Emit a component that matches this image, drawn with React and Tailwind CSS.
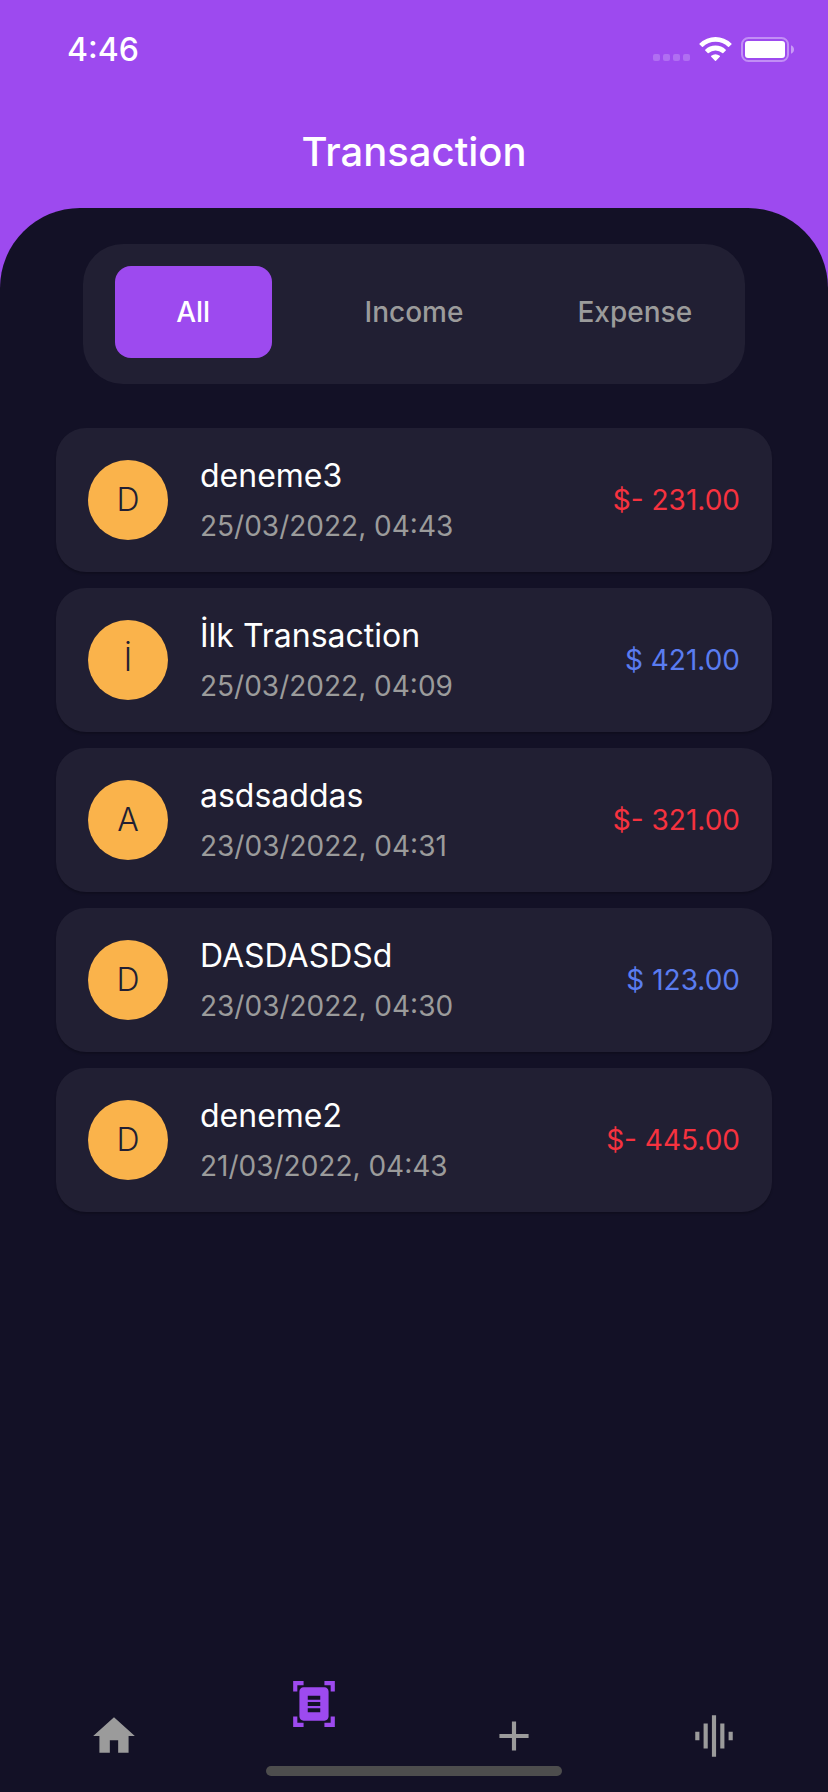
import { useState } from "react";

const transactions = [
  { id: 1, title: "deneme3", date: "25/03/2022, 04:43", amount: -231 },
  { id: 2, title: "İlk Transaction", date: "25/03/2022, 04:09", amount: 421 },
  { id: 3, title: "asdsaddas", date: "23/03/2022, 04:31", amount: -321 },
  { id: 4, title: "DASDASDSd", date: "23/03/2022, 04:30", amount: 123 },
  { id: 5, title: "deneme2", date: "21/03/2022, 04:43", amount: -445 },
];

const filters = ["All", "Income", "Expense"];

const tabs = [
  { name: "Home", path: "M10 20v-6h4v6h5v-8h3L12 3 2 12h3v8z" },
  {
    name: "Transactions",
    path: "M7 3H4v3H2V1h5v2zM22 6V1h-5v2h3v3h2zM7 21H4v-3H2v5h5v-2zM20 18v3h-3v2h5v-5h-2zM19 18c0 1.1-.9 2-2 2H7c-1.1 0-2-.9-2-2V6c0-1.1.9-2 2-2h10c1.1 0 2 .9 2 2v12zM15 8H9v2h6V8zm0 3H9v2h6v-2zm0 3H9v2h6v-2z",
  },
  { name: "Add", path: "M19 13h-6v6h-2v-6H5v-2h6V5h2v6h6v2z" },
  {
    name: "Statistics",
    path: "M7 18h2V6H7v12zm4 4h2V2h-2v20zm-8-8h2v-4H3v4zm12 4h2V6h-2v12zm4-8v4h2v-4h-2z",
  },
];

function StatusBar() {
  return (
    <div className="flex h-[99px] items-center justify-between pr-[34px] pl-[67px]">
      <span className="text-[32px] leading-[34px] font-medium">4:46</span>
      <div className="flex items-end gap-[9px]">
        <svg width="37" height="25" viewBox="0 0 37 25" fill="#fff" fillOpacity="0.2" aria-hidden="true">
          <rect x="0" y="17" width="7" height="7" rx="2" />
          <rect x="10" y="17" width="7" height="7" rx="2" />
          <rect x="20" y="17" width="7" height="7" rx="2" />
          <rect x="30" y="17" width="7" height="7" rx="2" />
        </svg>
        <svg width="33" height="25" viewBox="0 0 33 25" fill="#fff" aria-hidden="true">
          <path d="M.6 6.4A23 23 0 0 1 32.4 6.4Q32.9 6.9 32.4 7.4L30 9.8Q29.5 10.2 29 9.8A18.200 18.200 0 0 0 4 9.800Q3.500 10.200 3 9.800L.6 7.400Q.1 6.900 .6 6.400Z" />
          <path d="M6.200 12.700A15 15 0 0 1 26.800 12.700Q27.200 13.200 26.800 13.600L24.300 16.100Q23.800 16.500 23.300 16.100A10 10 0 0 0 9.700 16.100Q9.200 16.500 8.700 16.100L6.200 13.600Q5.800 13.200 6.200 12.700Z" />
          <path d="M12.200 18.800A7 7 0 0 1 20.800 18.800Q21.300 19.300 20.800 19.800L17 23.700Q16.500 24.200 16 23.700L12.200 19.800Q11.700 19.300 12.200 18.800Z" />
        </svg>
        <svg width="53" height="25" viewBox="0 0 53 25" aria-hidden="true">
          <rect x="1" y="1" width="46" height="23" rx="6.500" fill="none" stroke="#fff" strokeOpacity="0.38" strokeWidth="2" />
          <rect x="4" y="4" width="40" height="17" rx="3" fill="#fff" />
          <path d="M50 8.200C52 9 53 10.500 53 12.500S52 16 50 16.800Z" fill="#fff" fillOpacity="0.45" />
        </svg>
      </div>
    </div>
  );
}

function TransactionCard({ title, date, amount }) {
  const spent = amount < 0;
  return (
    <li className="flex items-center gap-8 rounded-[30px] bg-[#211f33] p-8 shadow-[0_2px_2px_rgba(0,0,0,0.2)]">
      <span
        aria-hidden="true"
        className="flex size-20 shrink-0 items-center justify-center rounded-full bg-[#fab34b] text-[32px] leading-none font-light text-[#211f33]"
      >
        {title[0].toUpperCase()}
      </span>
      <div className="-my-2 flex min-w-0 flex-1 flex-col gap-2">
        <h2 className="text-[32px] leading-11 text-white">{title}</h2>
        <p className="text-[28px] leading-10 text-[#9b9b9b]">{date}</p>
      </div>
      <span className={spent ? "text-[28px] leading-10 text-[#f6323f]" : "text-[28px] leading-10 text-[#5a7cf0]"}>
        {spent ? "$- " : "$ "}
        {Math.abs(amount).toFixed(2)}
      </span>
    </li>
  );
}

export default function App() {
  const [filter, setFilter] = useState("All");
  const [tab, setTab] = useState("Transactions");
  const shown = transactions.filter(
    (t) => filter === "All" || (filter === "Income" ? t.amount > 0 : t.amount < 0)
  );

  return (
    <div className="flex min-h-screen flex-col bg-[#9d4aef] font-['Inter','Noto_Sans',sans-serif] text-white">
      <header className="pb-[3px]">
        <StatusBar />
        <h1 className="text-center text-[40px] leading-[106px] font-medium">Transaction</h1>
      </header>

      <main className="flex flex-1 flex-col rounded-t-[80px] bg-[#131126] pt-9">
        <div className="mx-auto grid h-[140px] w-4/5 grid-cols-3 items-start rounded-[40px] bg-[#211f33] pt-[22px]">
          {filters.map((name) => (
            <button
              key={name}
              type="button"
              aria-pressed={filter === name}
              onClick={() => setFilter(name)}
              className={
                filter === name
                  ? "mx-8 h-[92px] rounded-2xl bg-[#9d4aef] text-[28px] font-medium text-white"
                  : "mx-8 h-[92px] rounded-2xl text-[28px] font-medium text-[#9b9b9b]"
              }
            >
              {name}
            </button>
          ))}
        </div>

        <ul className="mt-11 flex flex-1 flex-col gap-4 px-14">
          {shown.map((t) => (
            <TransactionCard key={t.id} title={t.title} date={t.date} amount={t.amount} />
          ))}
        </ul>

        <nav className="grid grid-cols-4 px-[14px] pt-8">
          {tabs.map(({ name, path }) => (
            <button
              key={name}
              type="button"
              aria-label={name}
              aria-current={tab === name ? "page" : undefined}
              onClick={() => setTab(name)}
              className={
                tab === name
                  ? "-mt-8 mb-8 flex justify-center text-[#9d4aef]"
                  : "flex justify-center text-[#9b9b9b]"
              }
            >
              <svg width="50" height="50" viewBox="0 0 24 24" fill="currentColor" aria-hidden="true">
                <path d={path} />
              </svg>
            </button>
          ))}
        </nav>
        <div className="mx-auto mt-[5px] mb-4 h-[10px] w-[296px] rounded-full bg-[#4d4d4d]" />
      </main>
    </div>
  );
}
